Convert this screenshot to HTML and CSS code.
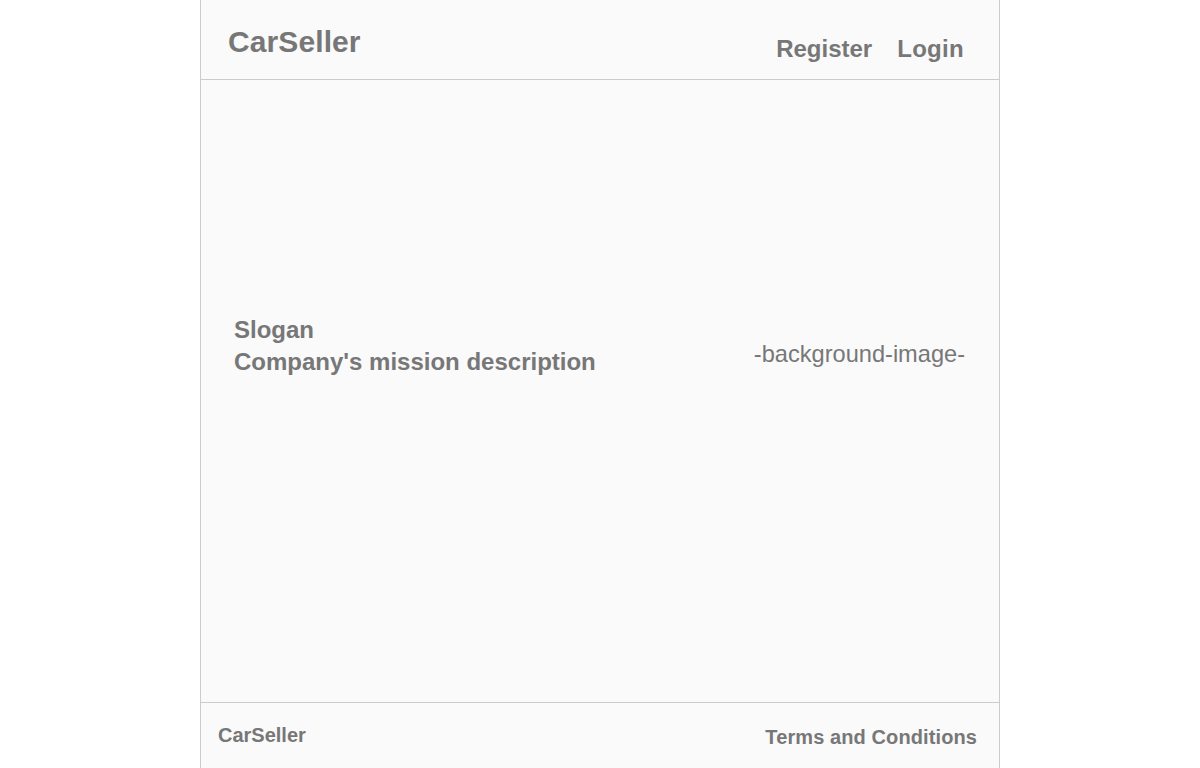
FILE: index.html
```html
<!DOCTYPE html>
<html lang="en">
<head>
<meta charset="utf-8">
<title>CarSeller</title>
<link rel="stylesheet" href="styles.css">
</head>
<body>
<div class="page">
  <header class="header">
    <div class="logo">CarSeller</div>
    <nav class="nav">
      <a class="nav-link" href="#">Register</a>
      <a class="nav-link nav-login" href="#">Login</a>
    </nav>
  </header>
  <main class="hero">
    <div class="hero-text">
      <div class="slogan">Slogan</div>
      <div class="mission">Company's mission description</div>
    </div>
    <div class="hero-bg">-background-image-</div>
  </main>
  <footer class="footer">
    <div class="footer-logo">CarSeller</div>
    <a class="footer-link" href="#">Terms and Conditions</a>
  </footer>
</div>
</body>
</html>
```

FILE: styles.css
```css
html, body {
  margin: 0;
  padding: 0;
  background: #ffffff;
}

body {
  font-family: "Liberation Sans", Arial, sans-serif;
  color: #777777;
}

.page {
  width: 800px;
  margin: 0 auto;
  box-sizing: border-box;
  background: #fafafa;
  border-left: 1px solid #cccccc;
  border-right: 1px solid #cccccc;
  min-height: 800px;
}

.header {
  display: flex;
  justify-content: space-between;
  align-items: flex-start;
  height: 80px;
  box-sizing: border-box;
  border-bottom: 1px solid #cccccc;
  padding: 0 35px 0 27px;
}

.logo {
  font-size: 30px;
  line-height: 34px;
  font-weight: bold;
  letter-spacing: 0.1px;
  margin-top: 25px;
}

.nav {
  display: flex;
  gap: 25px;
  margin-top: 35px;
}

.nav-link {
  font-size: 24px;
  line-height: 28px;
  font-weight: bold;
  color: #777777;
  text-decoration: none;
}

.nav-login {
  letter-spacing: 0.3px;
}

.hero {
  display: flex;
  justify-content: space-between;
  align-items: flex-start;
  height: 622px;
  box-sizing: border-box;
  padding: 234px 34px 0 33px;
}

.hero-text {
  font-size: 24px;
  line-height: 32px;
  font-weight: bold;
}

.hero-bg {
  font-size: 23.6px;
  line-height: 28px;
  margin-top: 26px;
}

.footer {
  display: flex;
  justify-content: space-between;
  align-items: flex-start;
  border-top: 1px solid #cccccc;
  padding: 21px 22px 20px 17px;
  height: 80px;
  box-sizing: border-box;
}

.footer-logo {
  font-size: 20px;
  line-height: 23px;
  font-weight: bold;
}

.footer-link {
  font-size: 20px;
  line-height: 23px;
  font-weight: bold;
  letter-spacing: 0.1px;
  color: #777777;
  text-decoration: none;
  margin-top: 2px;
}
```
